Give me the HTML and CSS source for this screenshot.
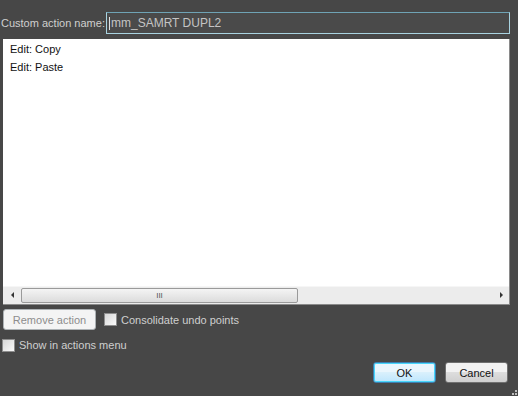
FILE: index.html
```html
<!DOCTYPE html>
<html lang="en">
<head>
    <meta charset="UTF-8">
    <title>Custom action</title>
    <link rel="stylesheet" href="styles.css">
</head>
<body>
    <div class="dialog">
        <div class="name-row">
            <label class="name-label">Custom action name:</label>
            <div class="name-input"><span class="caret"></span>mm_SAMRT DUPL2</div>
        </div>

        <div class="action-list">
            <div class="list-items">
                <div class="list-item">Edit: Copy</div>
                <div class="list-item">Edit: Paste</div>
            </div>
            <div class="hscroll">
                <span class="arrow arrow-left"></span>
                <div class="track">
                    <div class="thumb"><span class="grip">III</span></div>
                </div>
                <span class="arrow arrow-right"></span>
            </div>
        </div>

        <div class="option-row">
            <button class="btn btn-disabled">Remove action</button>
            <span class="check"></span>
            <span class="check-label">Consolidate undo points</span>
        </div>

        <div class="option-row show-row">
            <span class="check"></span>
            <span class="check-label">Show in actions menu</span>
        </div>

        <div class="footer">
            <button class="btn btn-default">OK</button>
            <button class="btn">Cancel</button>
        </div>
        <div class="resize-grip">
            <span></span><span></span><span></span>
        </div>
    </div>
</body>
</html>
```

FILE: styles.css
```css
body {
    margin: 0;
    background: #474747;
    font-family: "Liberation Sans", Arial, sans-serif;
    font-size: 11px;
}

.dialog {
    position: relative;
    width: 518px;
    height: 396px;
    box-sizing: border-box;
    padding-top: 12px;
}

/* Name row */
.name-row {
    display: flex;
    align-items: center;
    height: 22px;
}

.name-label {
    flex: 0 0 105px;
    padding-left: 1px;
    color: #cfcfcf;
    white-space: nowrap;
}

.name-input {
    flex: 0 0 404px;
    height: 22px;
    box-sizing: border-box;
    border: 1px solid #a9d3e0;
    border-top-color: #6fa3b5;
    padding: 3px 2px;
    color: #c4c4c4;
    background: #4a4a4a;
    line-height: 14px;
    font-size: 12px;
    display: flex;
    align-items: center;
}

.caret {
    width: 1px;
    height: 13px;
    background: #e0e0e0;
    margin-right: 1px;
}

/* List */
.action-list {
    margin: 5px 8px 0 3px;
    height: 265px;
    background: #fff;
    border-right: 1px solid #8a8a8a;
    border-bottom: 1px solid #8a8a8a;
    display: flex;
    flex-direction: column;
}

.list-items {
    flex: 1;
    padding: 1px 7px;
}

.list-item {
    height: 18px;
    line-height: 18px;
    color: #111;
}

.hscroll {
    height: 17px;
    display: flex;
    align-items: center;
    background: #ececec;
    border-top: 1px solid #f6f6f6;
}

.arrow {
    width: 18px;
    height: 17px;
    position: relative;
}

.arrow::after {
    content: "";
    position: absolute;
    top: 5px;
    border-top: 3px solid transparent;
    border-bottom: 3px solid transparent;
}

.arrow-left::after {
    left: 8px;
    border-right: 3px solid #333;
}

.arrow-right::after {
    left: 9px;
    border-left: 3px solid #333;
}

.track {
    flex: 1;
    height: 17px;
    display: flex;
    align-items: center;
}

.thumb {
    width: 277px;
    height: 15px;
    box-sizing: border-box;
    border: 1px solid #9a9a9a;
    border-radius: 2px;
    background: linear-gradient(#f4f4f4, #dcdcdc);
    display: flex;
    justify-content: center;
    align-items: center;
}

.grip {
    font-size: 8px;
    color: #555;
}

/* Options */
.option-row {
    display: flex;
    align-items: center;
    margin-top: 4px;
    padding-left: 3px;
    height: 21px;
}

.check {
    width: 11px;
    height: 11px;
    border: 1px solid #8e8e8e;
    background: linear-gradient(135deg, #d8d8d8, #fafafa);
    margin-left: 8px;
}

.check-label {
    color: #cfcfcf;
    margin-left: 4px;
    white-space: nowrap;
}

.show-row {
    margin-top: 8px;
    padding-left: 2px;
    height: 14px;
}

.show-row .check {
    margin-left: 0;
}

/* Buttons */
.btn {
    font-family: "Liberation Sans", Arial, sans-serif;
    font-size: 11px;
    height: 21px;
    box-sizing: border-box;
    padding: 0;
    border: 1px solid #707070;
    border-radius: 3px;
    background: linear-gradient(#f2f2f2 50%, #dddddd 50%, #cfcfcf);
    color: #111;
}

.btn-disabled {
    width: 93px;
    border-color: #adb2b5;
    background: #f4f4f4;
    color: #8d8d8d;
}

.footer {
    display: flex;
    justify-content: flex-end;
    gap: 9px;
    margin-top: 10px;
    padding-right: 10px;
}

.footer .btn {
    width: 63px;
}

.btn-default {
    border-color: #3c7fb1;
    box-shadow: inset 0 0 0 1px #48d7fb;
    background: linear-gradient(#eaf6fd 50%, #d9f0fc 50%, #bee6fd);
}

.resize-grip {
    position: absolute;
    right: 1px;
    bottom: 1px;
    width: 6px;
    height: 6px;
}

.resize-grip span {
    position: absolute;
    width: 2px;
    height: 2px;
    background: #bdbdbd;
}

.resize-grip span:nth-child(1) { right: 0; bottom: 0; }
.resize-grip span:nth-child(2) { right: 3px; bottom: 0; }
.resize-grip span:nth-child(3) { right: 0; bottom: 3px; }
```
